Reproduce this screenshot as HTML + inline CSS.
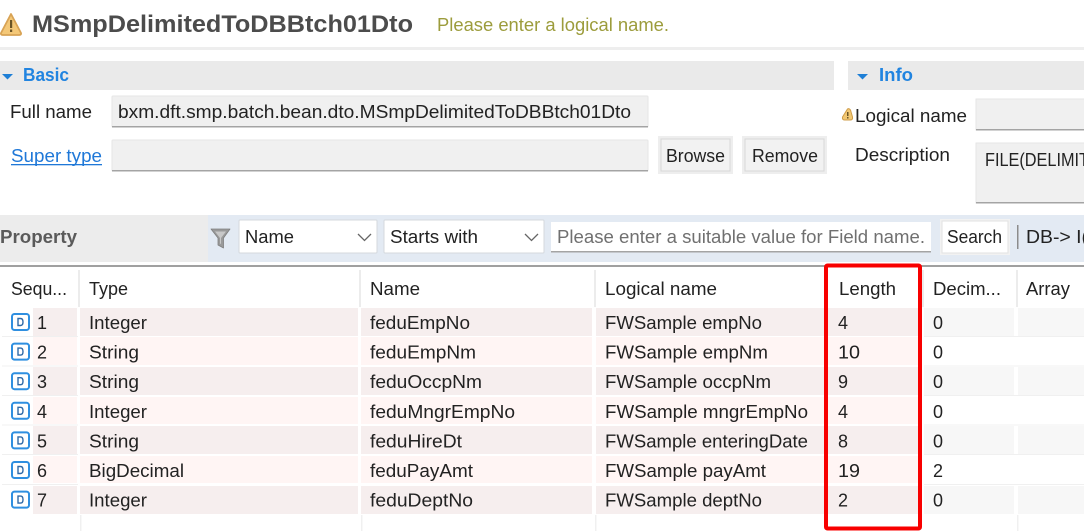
<!DOCTYPE html>
<html><head><meta charset="utf-8"><style>
html,body{margin:0;padding:0;background:#fff;width:1084px;height:531px;overflow:hidden}
svg{display:block;filter:blur(.3px)}
text{font-family:"Liberation Sans","Noto Sans CJK KR",sans-serif;font-size:18px;fill:#222}
</style></head><body>
<svg width="1084" height="531" viewBox="0 0 1084 531" xmlns="http://www.w3.org/2000/svg">
<rect width="1084" height="531" fill="#fff"/>
<!-- header -->
<path d="M11 14 L21 33 Q21.500 35 19 35 L3 35 Q.5 35 1 33 Z" fill="#f4c878" stroke="#d8a355" stroke-width="1.800" stroke-linejoin="round"/>
<rect x="10" y="20" width="2.200" height="8" fill="#6b5426"/><rect x="10" y="29.500" width="2.200" height="2.500" fill="#6b5426"/>
<text x="32" y="32" textLength="381" lengthAdjust="spacingAndGlyphs" style="font-size:24px;font-weight:bold;fill:#4c4c4c">MSmpDelimitedToDBBtch01Dto</text>
<text x="437" y="31" textLength="232" lengthAdjust="spacingAndGlyphs" style="fill:#9c9c3c">Please enter a logical name.</text>
<rect x="0" y="47" width="1084" height="3" fill="#eeeeee"/>
<!-- Basic -->
<rect x="0" y="61" width="834" height="29" fill="#eaeaea"/>
<path d="M2 74 H13 L7.500 79.500 Z" fill="#1e7fd6"/>
<text x="23" y="81" textLength="46" lengthAdjust="spacingAndGlyphs" style="font-weight:bold;fill:#2184e0">Basic</text>
<text x="10" y="118" textLength="82" lengthAdjust="spacingAndGlyphs">Full name</text>
<rect x="112" y="96" width="536" height="31" rx="1" fill="#f0f0f0" stroke="#e6e6e6"/>
<rect x="112" y="126" width="536" height="1.500" fill="#a4a4a4"/>
<text x="118" y="118" textLength="513" lengthAdjust="spacingAndGlyphs">bxm.dft.smp.batch.bean.dto.MSmpDelimitedToDBBtch01Dto</text>
<text x="11" y="162" textLength="91" lengthAdjust="spacingAndGlyphs" style="fill:#1f78d8">Super type</text>
<rect x="11" y="164" width="91" height="1.300" fill="#1f78d8"/>
<rect x="112" y="140" width="536" height="31" rx="1" fill="#f0f0f0" stroke="#e6e6e6"/>
<rect x="112" y="170" width="536" height="1.500" fill="#a4a4a4"/>
<rect x="658" y="136" width="75" height="38" fill="#eeeeee"/>
<rect x="661" y="139" width="69" height="32" fill="#f2f2f2" stroke="#d8d8d8"/>
<text x="666" y="162" textLength="59" lengthAdjust="spacingAndGlyphs">Browse</text>
<rect x="742" y="136" width="85" height="38" fill="#eeeeee"/>
<rect x="745" y="139" width="79" height="32" fill="#f2f2f2" stroke="#d8d8d8"/>
<text x="752" y="162" textLength="66" lengthAdjust="spacingAndGlyphs">Remove</text>
<!-- Info -->
<rect x="848" y="61" width="236" height="29" fill="#eaeaea"/>
<path d="M857 74 H868 L862.500 79.500 Z" fill="#1e7fd6"/>
<text x="879" y="81" textLength="34" lengthAdjust="spacingAndGlyphs" style="font-weight:bold;fill:#2184e0">Info</text>
<path d="M847.500 109 Q849 108 850.500 110 L852.500 117 Q853 120 850.500 120 H844.500 Q842 120 842.500 117 Z" fill="#f2c873" stroke="#cf9c48"/>
<rect x="847" y="112" width="1.500" height="4" fill="#6b5426"/><rect x="847" y="117" width="1.500" height="1.500" fill="#6b5426"/>
<text x="855" y="122" textLength="112" lengthAdjust="spacingAndGlyphs">Logical name</text>
<rect x="976" y="99" width="120" height="31" fill="#f0f0f0" stroke="#e6e6e6"/>
<rect x="976" y="129" width="120" height="1.500" fill="#a4a4a4"/>
<text x="855" y="161" textLength="95" lengthAdjust="spacingAndGlyphs">Description</text>
<rect x="976" y="143" width="120" height="60" fill="#f0f0f0" stroke="#e6e6e6"/>
<rect x="976" y="202" width="120" height="1.500" fill="#a4a4a4"/>
<text x="985" y="166" textLength="104" lengthAdjust="spacingAndGlyphs">FILE(DELIMIT</text>
<!-- Property bar -->
<rect x="0" y="215" width="208" height="47" fill="#ececec"/>
<rect x="208" y="215" width="876" height="47" fill="#e3eaf3"/>
<text x="0" y="243" textLength="77" lengthAdjust="spacingAndGlyphs" style="font-weight:bold;fill:#5a5a5a">Property</text>
<path d="M211 229 H230 L223.500 238 V248 L218 245 V238 Z" fill="#9a9a9a" stroke="#7f7f7f" stroke-width=".8" stroke-linejoin="round"/>
<path d="M215 231.500 H226 L221 238 V244 L220 243.500 V238 Z" fill="#c8c8c8"/>
<rect x="239" y="220" width="138" height="33" rx="1" fill="#fff" stroke="#d4d8de"/>
<text x="245" y="243" textLength="49" lengthAdjust="spacingAndGlyphs">Name</text>
<path d="M358 234 L364.500 240.500 L371 234" fill="none" stroke="#666" stroke-width="1.300"/>
<rect x="384" y="220" width="160" height="33" rx="1" fill="#fff" stroke="#d4d8de"/>
<text x="390" y="243" textLength="88" lengthAdjust="spacingAndGlyphs">Starts with</text>
<path d="M525 234 L531.500 240.500 L538 234" fill="none" stroke="#666" stroke-width="1.300"/>
<rect x="551" y="222" width="380" height="30" fill="#fff"/>
<rect x="551" y="251" width="380" height="1.500" fill="#a4a4a4"/>
<text x="557" y="243" textLength="368" lengthAdjust="spacingAndGlyphs" style="fill:#707070">Please enter a suitable value for Field name.</text>
<rect x="940" y="219" width="70" height="36" fill="#f2f2f2"/>
<rect x="942" y="221" width="66" height="32" fill="#fff" stroke="#e2e2e2"/>
<text x="947" y="243" textLength="55" lengthAdjust="spacingAndGlyphs">Search</text>
<rect x="1017" y="225" width="1.500" height="24" fill="#8c8c8c"/>
<text x="1026" y="243" textLength="62" lengthAdjust="spacingAndGlyphs">DB-&gt; I(</text>
<!-- table header -->
<rect x="0" y="265" width="1084" height="2" fill="#a0a0a0"/>
<g fill="#ececec">
<rect x="78" y="270" width="2" height="37"/><rect x="359" y="270" width="2" height="37"/><rect x="594" y="270" width="2" height="37"/><rect x="922" y="270" width="2" height="37"/><rect x="1016" y="270" width="2" height="37"/>
</g>
<text x="11" y="295" textLength="56" lengthAdjust="spacingAndGlyphs">Sequ...</text>
<text x="89" y="295" textLength="39" lengthAdjust="spacingAndGlyphs">Type</text>
<text x="370" y="295" textLength="50" lengthAdjust="spacingAndGlyphs">Name</text>
<text x="605" y="295" textLength="112" lengthAdjust="spacingAndGlyphs">Logical name</text>
<text x="839" y="295" textLength="57" lengthAdjust="spacingAndGlyphs">Length</text>
<text x="933" y="295" textLength="68" lengthAdjust="spacingAndGlyphs">Decim...</text>
<text x="1026" y="295" textLength="44" lengthAdjust="spacingAndGlyphs">Array</text>
<!-- rows backgrounds -->
<g fill="#f6eeee">
<rect x="33" y="308" width="44" height="28"/><rect x="80" y="308" width="278" height="28"/><rect x="361" y="308" width="231" height="28"/><rect x="596" y="308" width="322" height="28"/>
<rect x="33" y="367" width="44" height="28"/><rect x="80" y="367" width="278" height="28"/><rect x="361" y="367" width="231" height="28"/><rect x="596" y="367" width="322" height="28"/>
<rect x="33" y="426" width="44" height="28"/><rect x="80" y="426" width="278" height="28"/><rect x="361" y="426" width="231" height="28"/><rect x="596" y="426" width="322" height="28"/>
<rect x="33" y="486" width="44" height="28"/><rect x="80" y="486" width="278" height="28"/><rect x="361" y="486" width="231" height="28"/><rect x="596" y="486" width="322" height="28"/>
</g>
<g fill="#fff5f4">
<rect x="33" y="337" width="44" height="28"/><rect x="80" y="337" width="278" height="28"/><rect x="361" y="337" width="231" height="28"/><rect x="596" y="337" width="322" height="28"/>
<rect x="33" y="397" width="44" height="27"/><rect x="80" y="397" width="278" height="27"/><rect x="361" y="397" width="231" height="27"/><rect x="596" y="397" width="322" height="27"/>
<rect x="33" y="456" width="44" height="27"/><rect x="80" y="456" width="278" height="27"/><rect x="361" y="456" width="231" height="27"/><rect x="596" y="456" width="322" height="27"/>
</g>
<g fill="#f7f7f7">
<rect x="924" y="308" width="90" height="28"/><rect x="1018" y="308" width="66" height="28"/>
<rect x="924" y="367" width="90" height="28"/><rect x="1018" y="367" width="66" height="28"/>
<rect x="924" y="426" width="90" height="28"/><rect x="1018" y="426" width="66" height="28"/>
<rect x="924" y="486" width="90" height="28"/><rect x="1018" y="486" width="66" height="28"/>
</g>
<g fill="#f0f0f0">
<rect x="2" y="336" width="76" height="1"/><rect x="2" y="365.500" width="76" height="1"/><rect x="2" y="395" width="76" height="1"/><rect x="2" y="424.500" width="76" height="1"/><rect x="2" y="454" width="76" height="1"/><rect x="2" y="484" width="76" height="1"/><rect x="924" y="336" width="160" height="1"/><rect x="924" y="365.500" width="160" height="1"/><rect x="924" y="395" width="160" height="1"/><rect x="924" y="424.500" width="160" height="1"/><rect x="924" y="454" width="160" height="1"/><rect x="924" y="484" width="160" height="1"/>
<rect x="80" y="515" width="1.500" height="16"/><rect x="361" y="515" width="1.500" height="16"/><rect x="595" y="515" width="1.500" height="16"/><rect x="1017" y="515" width="1.500" height="16"/>
</g>
<!-- D icons -->
<g fill="none" stroke="#2f8fe0" stroke-width="2">
<rect x="12" y="314" width="17" height="16" rx="2.500"/><rect x="12" y="343.600" width="17" height="16" rx="2.500"/><rect x="12" y="373.200" width="17" height="16" rx="2.500"/><rect x="12" y="402.800" width="17" height="16" rx="2.500"/><rect x="12" y="432.400" width="17" height="16" rx="2.500"/><rect x="12" y="462" width="17" height="16" rx="2.500"/><rect x="12" y="491.600" width="17" height="16" rx="2.500"/>
</g>
<g fill="none" stroke="#2f6aa8" stroke-width="1.400">
<path d="M18 318.500 h2.500 q2.500 0 2.500 3.500 t-2.500 3.500 h-2.500 z"/><path d="M18 348.100 h2.500 q2.500 0 2.500 3.500 t-2.500 3.500 h-2.500 z"/><path d="M18 377.700 h2.500 q2.500 0 2.500 3.500 t-2.500 3.500 h-2.500 z"/><path d="M18 407.300 h2.500 q2.500 0 2.500 3.500 t-2.500 3.500 h-2.500 z"/><path d="M18 436.900 h2.500 q2.500 0 2.500 3.500 t-2.500 3.500 h-2.500 z"/><path d="M18 466.500 h2.500 q2.500 0 2.500 3.500 t-2.500 3.500 h-2.500 z"/><path d="M18 496.100 h2.500 q2.500 0 2.500 3.500 t-2.500 3.500 h-2.500 z"/>
</g>
<!-- Row text -->
<text x="37" y="329">1</text><text x="89" y="329" textLength="58" lengthAdjust="spacingAndGlyphs">Integer</text><text x="370" y="329" textLength="100" lengthAdjust="spacingAndGlyphs">feduEmpNo</text><text x="605" y="329" textLength="157" lengthAdjust="spacingAndGlyphs">FWSample empNo</text><text x="838" y="329">4</text><text x="933" y="329">0</text>
<text x="37" y="358.600">2</text><text x="89" y="358.600" textLength="50" lengthAdjust="spacingAndGlyphs">String</text><text x="370" y="358.600" textLength="106" lengthAdjust="spacingAndGlyphs">feduEmpNm</text><text x="605" y="358.600" textLength="163" lengthAdjust="spacingAndGlyphs">FWSample empNm</text><text x="838" y="358.600" textLength="22" lengthAdjust="spacingAndGlyphs">10</text><text x="933" y="358.600">0</text>
<text x="37" y="388.200">3</text><text x="89" y="388.200" textLength="50" lengthAdjust="spacingAndGlyphs">String</text><text x="370" y="388.200" textLength="112" lengthAdjust="spacingAndGlyphs">feduOccpNm</text><text x="605" y="388.200" textLength="166" lengthAdjust="spacingAndGlyphs">FWSample occpNm</text><text x="838" y="388.200">9</text><text x="933" y="388.200">0</text>
<text x="37" y="417.800">4</text><text x="89" y="417.800" textLength="58" lengthAdjust="spacingAndGlyphs">Integer</text><text x="370" y="417.800" textLength="145" lengthAdjust="spacingAndGlyphs">feduMngrEmpNo</text><text x="605" y="417.800" textLength="203" lengthAdjust="spacingAndGlyphs">FWSample mngrEmpNo</text><text x="838" y="417.800">4</text><text x="933" y="417.800">0</text>
<text x="37" y="447.400">5</text><text x="89" y="447.400" textLength="50" lengthAdjust="spacingAndGlyphs">String</text><text x="370" y="447.400" textLength="92" lengthAdjust="spacingAndGlyphs">feduHireDt</text><text x="605" y="447.400" textLength="203" lengthAdjust="spacingAndGlyphs">FWSample enteringDate</text><text x="838" y="447.400">8</text><text x="933" y="447.400">0</text>
<text x="37" y="477">6</text><text x="89" y="477" textLength="95" lengthAdjust="spacingAndGlyphs">BigDecimal</text><text x="370" y="477" textLength="103" lengthAdjust="spacingAndGlyphs">feduPayAmt</text><text x="605" y="477" textLength="161" lengthAdjust="spacingAndGlyphs">FWSample payAmt</text><text x="838" y="477" textLength="22" lengthAdjust="spacingAndGlyphs">19</text><text x="933" y="477">2</text>
<text x="37" y="506.600">7</text><text x="89" y="506.600" textLength="58" lengthAdjust="spacingAndGlyphs">Integer</text><text x="370" y="506.600" textLength="103" lengthAdjust="spacingAndGlyphs">feduDeptNo</text><text x="605" y="506.600" textLength="157" lengthAdjust="spacingAndGlyphs">FWSample deptNo</text><text x="838" y="506.600">2</text><text x="933" y="506.600">0</text>
<!-- red highlight -->
<rect x="826" y="265.500" width="94" height="263" rx="1.500" fill="none" stroke="#f80000" stroke-width="4"/>
</svg>
</body></html>
